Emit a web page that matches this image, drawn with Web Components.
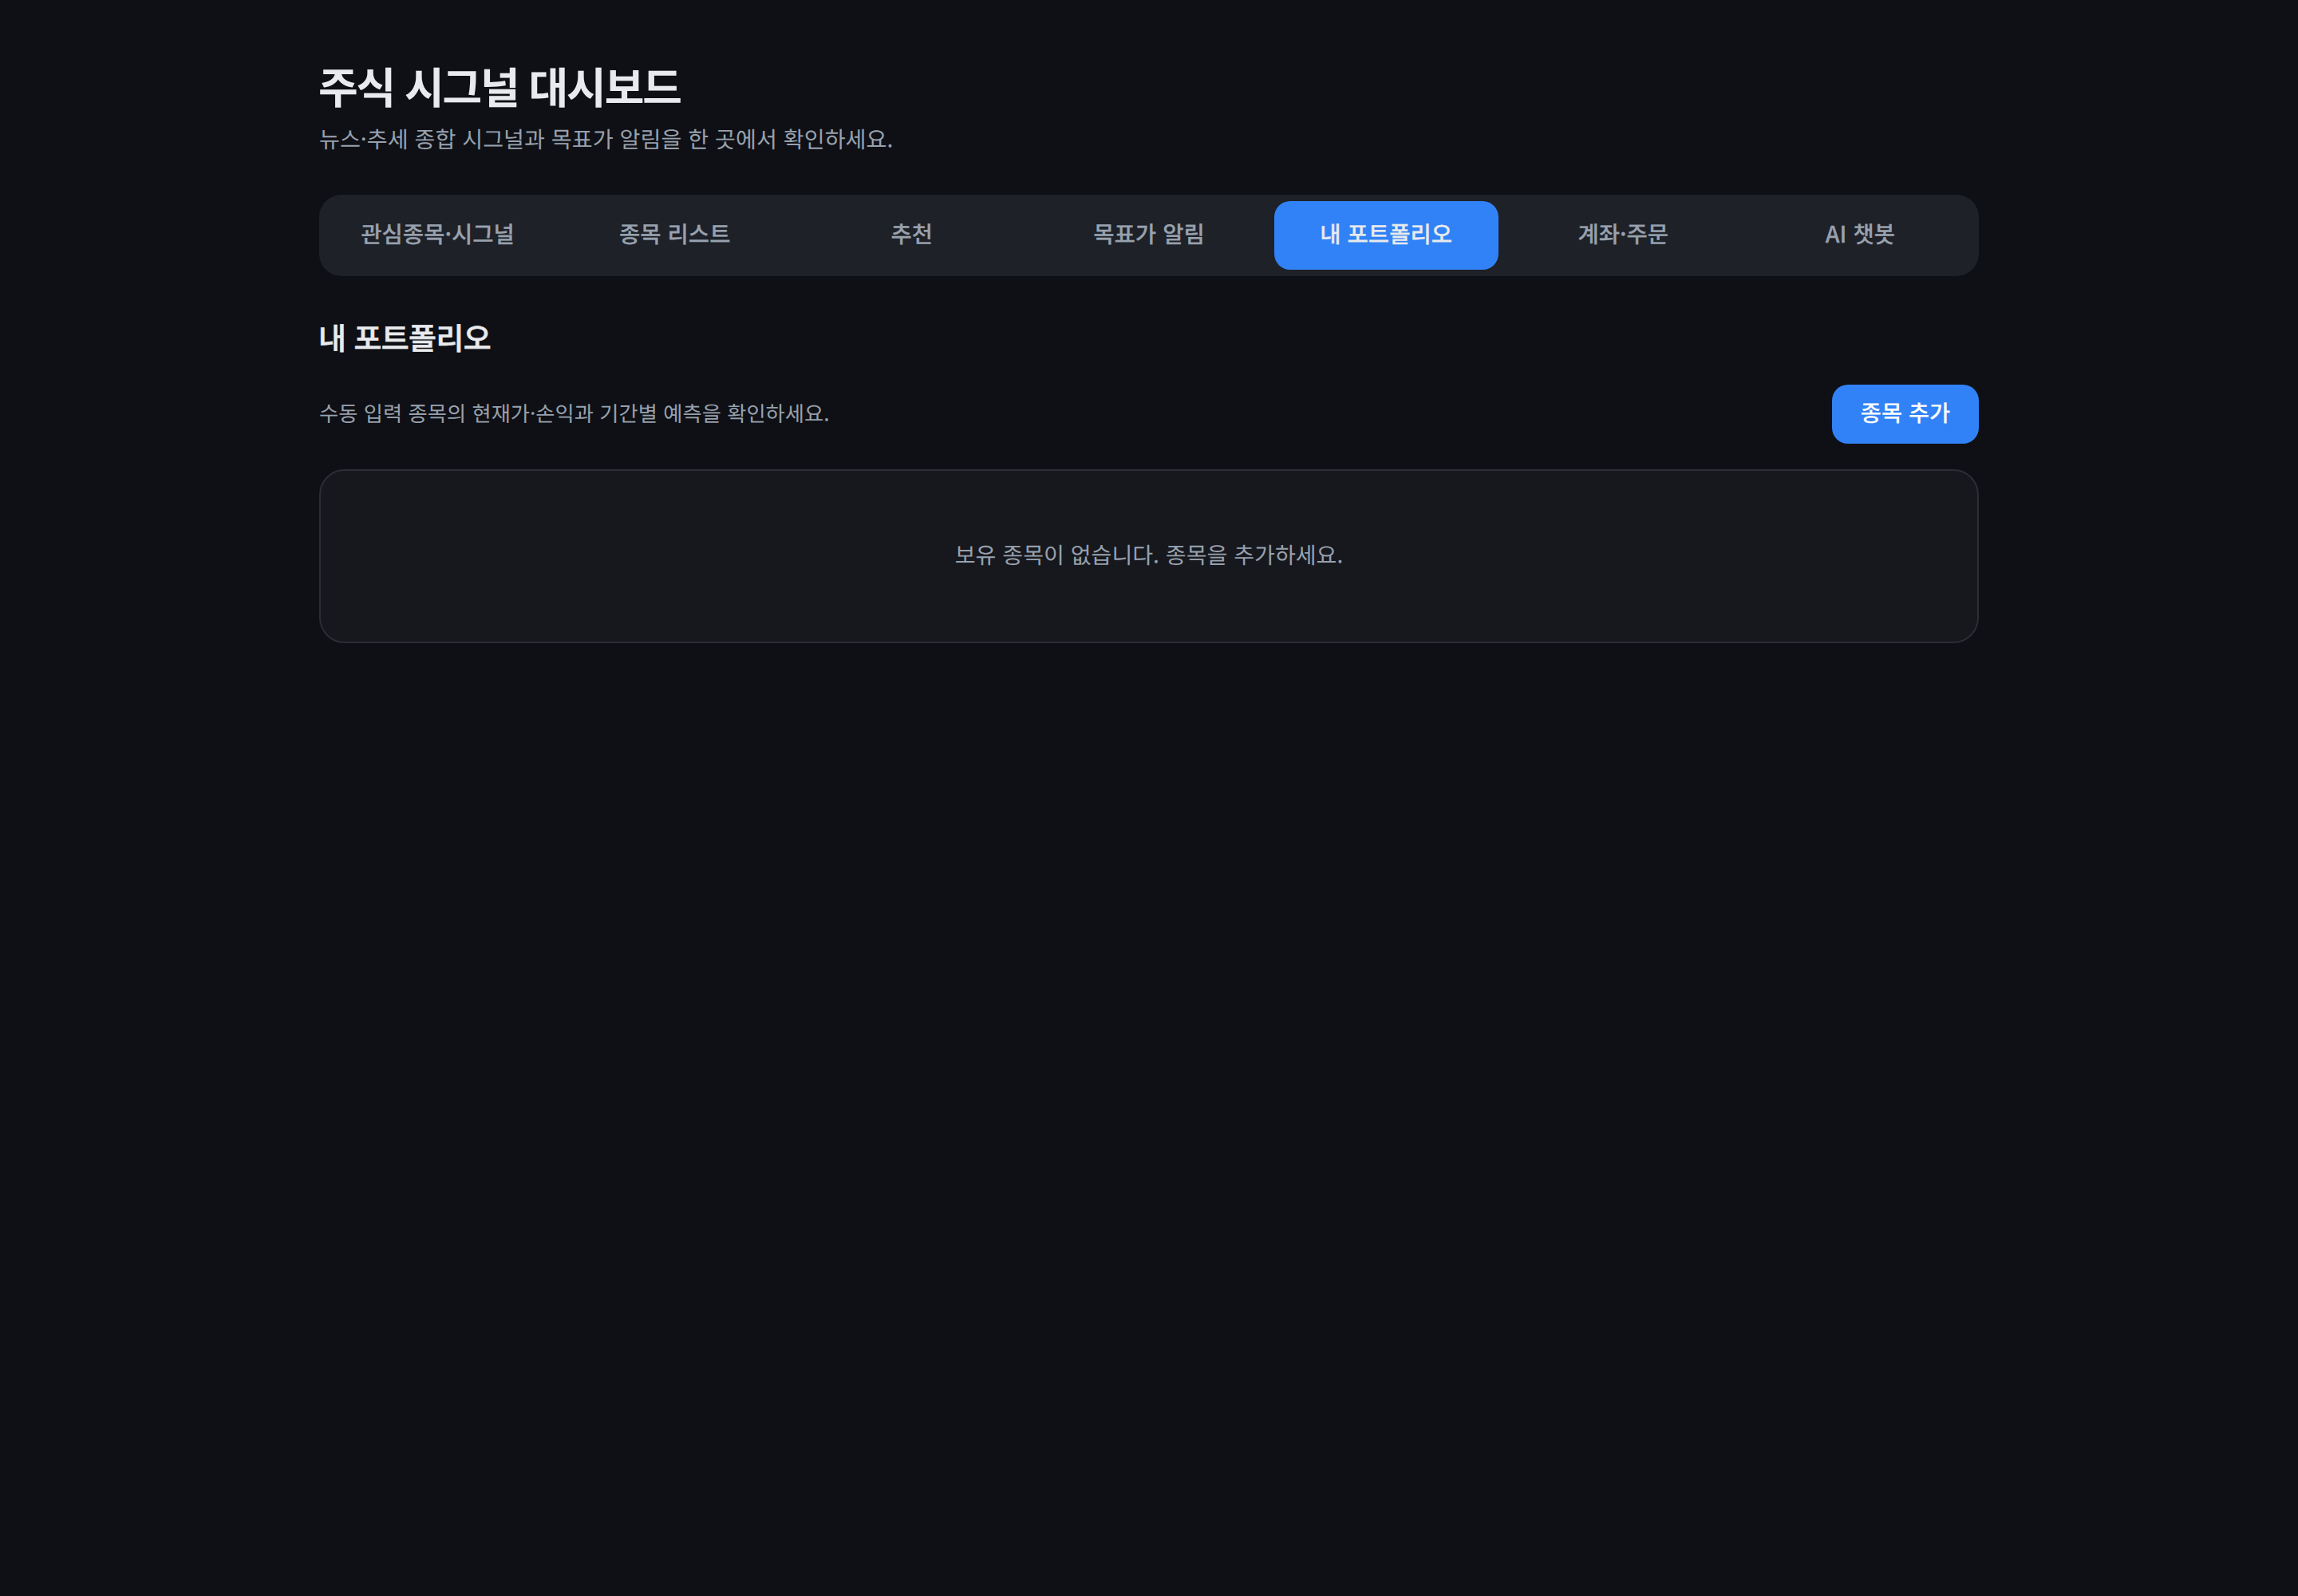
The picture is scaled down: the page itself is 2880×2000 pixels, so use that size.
<!DOCTYPE html>
<html lang="ko">
<head>
	<meta charset="utf-8">
	<title>주식 시그널 대시보드</title>
	<style>
		:root {
			--bg: #0f1015;
			--surface: #17181d;
			--surface-raised: #1e2128;
			--border: #2a2e35;
			--text: #e8eaed;
			--muted: #98a1ae;
			--accent: #3182f6;
		}

		body {
			margin: 0;
			min-height: 100vh;
			background: var(--bg);
			color: var(--text);
			font-family: "Noto Sans CJK KR", sans-serif;
			text-rendering: geometricPrecision;
		}
	</style>
</head>
<body>
	<stock-dashboard>
		<page-header slot="header">
			주식 시그널 대시보드
			<span slot="description">뉴스·추세 종합 시그널과 목표가 알림을 한 곳에서 확인하세요.</span>
		</page-header>
		<tab-bar slot="tabs">
			<tab-item>관심종목·시그널</tab-item>
			<tab-item>종목 리스트</tab-item>
			<tab-item>추천</tab-item>
			<tab-item>목표가 알림</tab-item>
			<tab-item active>내 포트폴리오</tab-item>
			<tab-item>계좌·주문</tab-item>
			<tab-item>AI 챗봇</tab-item>
		</tab-bar>
		<portfolio-section>
			<span slot="title">내 포트폴리오</span>
			<span slot="description">수동 입력 종목의 현재가·손익과 기간별 예측을 확인하세요.</span>
			<action-button slot="action">종목 추가</action-button>
			<empty-card>보유 종목이 없습니다. 종목을 추가하세요.</empty-card>
		</portfolio-section>
	</stock-dashboard>

	<script>
		/**
		 * Dummy HTML tag function for syntax highlighters.
		 * @returns {string} The original raw string.
		 */
		const html = x => x.raw[0];

		/**
		 * @param {string} name
		 * @param {string} markup
		 */
		function define(name, markup) {
			const template = document.createElement("template");
			template.innerHTML = markup;

			customElements.define(name, class extends HTMLElement {
				constructor() {
					super();

					const shadow = this.attachShadow({mode: "open"});
					shadow.appendChild(template.content.cloneNode(true));
				}
			});
		}

		define("stock-dashboard", html`
			<style>
				:host {
					display: block;
					box-sizing: border-box;
					width: 2080px;
					margin: 0 auto;
					padding-top: 73px;
				}
			</style>
			<slot name="header"></slot>
			<slot name="tabs"></slot>
			<main><slot></slot></main>
		`);

		define("page-header", html`
			<style>
				:host {
					display: block;
				}

				h1 {
					margin: 0 0 11px -1px;
					font-size: 54px;
					font-weight: 700;
					line-height: 68px;
					letter-spacing: -2.15px;
				}

				p {
					margin: 0;
					color: var(--muted);
					font-size: 28.2px;
					line-height: 44px;
				}
			</style>
			<h1><slot></slot></h1>
			<p><slot name="description"></slot></p>
		`);

		define("tab-bar", html`
			<style>
				:host {
					display: flex;
					gap: 16px;
					margin-top: 48px;
					padding: 8px;
					border-radius: 28px;
					background: var(--surface-raised);
				}
			</style>
			<slot></slot>
		`);

		// Weights between medium and bold are made with a thin text stroke
		define("tab-item", html`
			<style>
				:host {
					flex: 1 1 0;
					min-width: 0;
				}

				button {
					display: block;
					box-sizing: border-box;
					width: 100%;
					height: 86px;
					padding: 0 0 5px;
					border: 0;
					border-radius: 20px;
					background: none;
					color: var(--muted);
					font: inherit;
					font-size: 28.6px;
					font-weight: 500;
					text-rendering: inherit;
					white-space: nowrap;
					-webkit-text-stroke: 0.25px;
				}

				:host([active]) button {
					background: var(--accent);
					color: var(--text);
				}
			</style>
			<button><slot></slot></button>
		`);

		define("portfolio-section", html`
			<style>
				:host {
					display: block;
					margin-top: 48px;
				}

				h2 {
					margin: 0 0 32px -1px;
					font-size: 38px;
					font-weight: 500;
					line-height: 56px;
					letter-spacing: -0.6px;
					-webkit-text-stroke: 0.6px;
				}

				.toolbar {
					display: flex;
					align-items: center;
					justify-content: space-between;
					margin-bottom: 32px;
				}

				p {
					margin: 0;
					padding-bottom: 5px;
					color: var(--muted);
					font-size: 26.3px;
					line-height: 40px;
				}
			</style>
			<h2><slot name="title"></slot></h2>
			<div class="toolbar">
				<p><slot name="description"></slot></p>
				<slot name="action"></slot>
			</div>
			<slot></slot>
		`);

		define("action-button", html`
			<style>
				:host {
					display: block;
				}

				button {
					display: block;
					box-sizing: border-box;
					width: 184px;
					height: 74px;
					padding: 0 0 6px;
					border: 0;
					border-radius: 20px;
					background: var(--accent);
					color: #fff;
					font: inherit;
					font-size: 28.4px;
					font-weight: 500;
					text-rendering: inherit;
					-webkit-text-stroke: 0.1px;
				}
			</style>
			<button><slot></slot></button>
		`);

		define("empty-card", html`
			<style>
				:host {
					display: flex;
					align-items: center;
					justify-content: center;
					box-sizing: border-box;
					height: 218px;
					padding-bottom: 6px;
					border: 2px solid var(--border);
					border-radius: 32px;
					background: var(--surface);
					color: var(--muted);
					font-size: 28.1px;
				}
			</style>
			<span><slot></slot></span>
		`);
	</script>
</body>
</html>
